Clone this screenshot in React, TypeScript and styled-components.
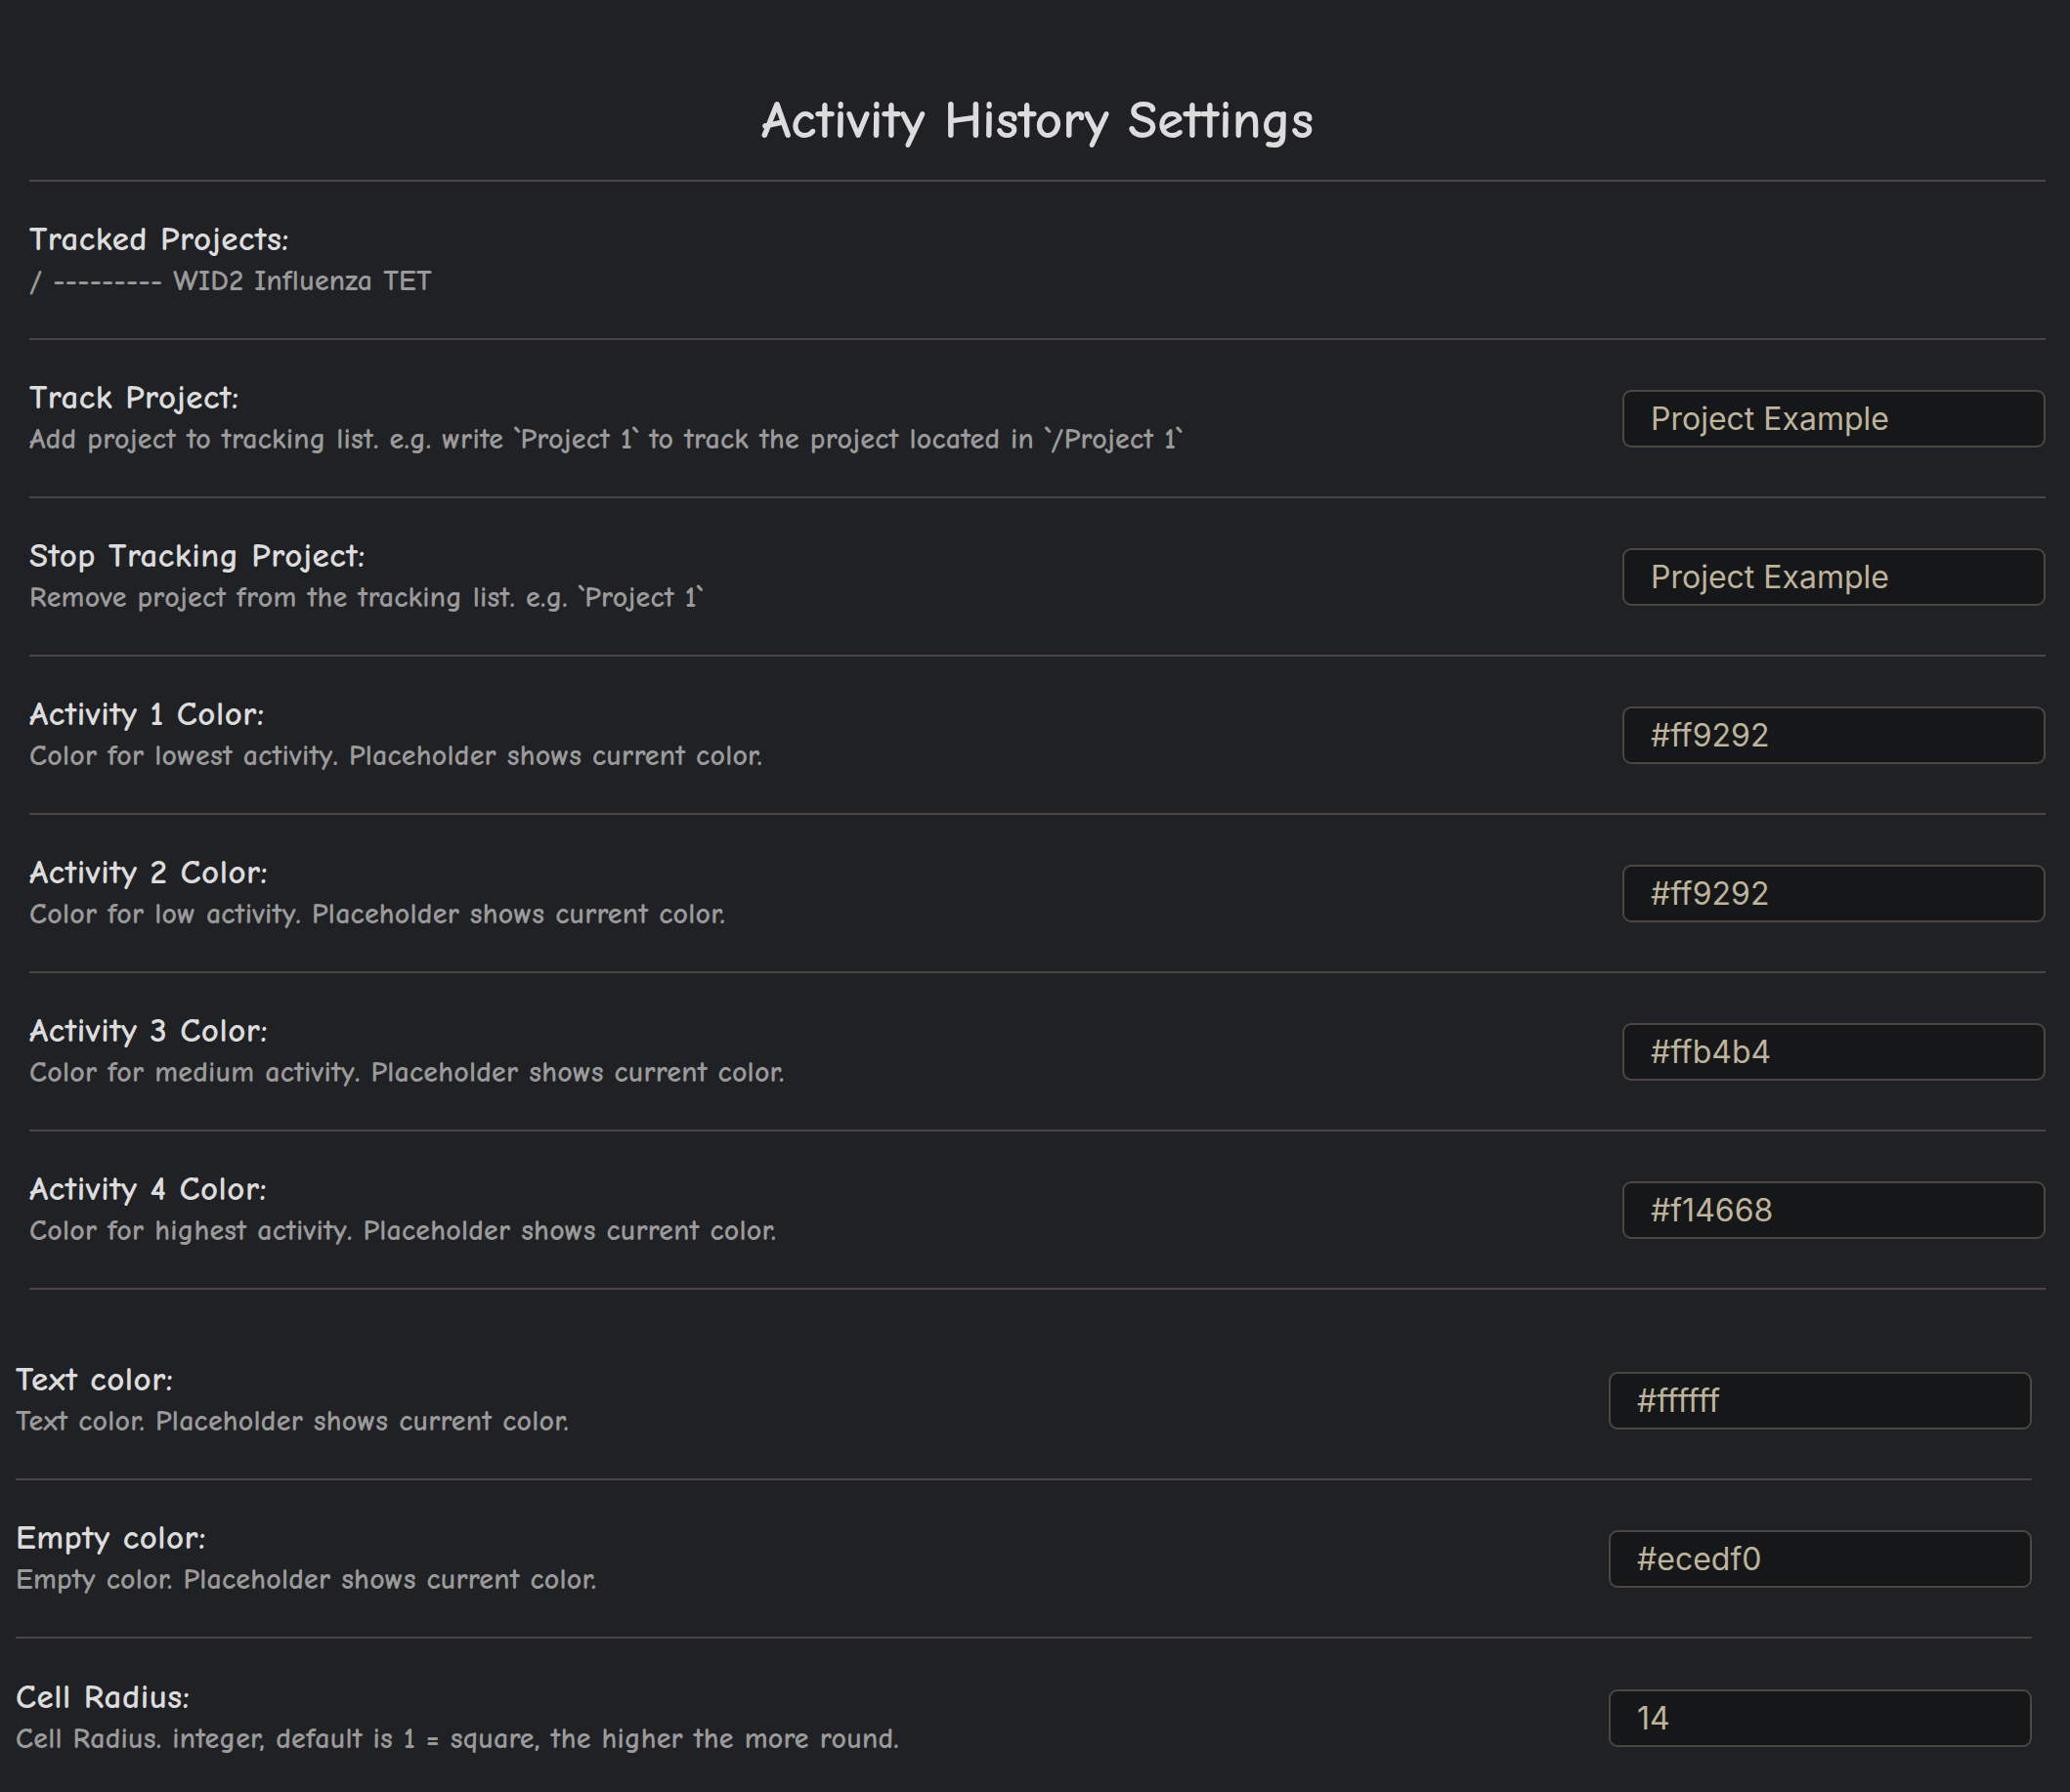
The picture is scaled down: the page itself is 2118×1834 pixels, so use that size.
import React from 'react';
import styled, { createGlobalStyle } from 'styled-components';

const GlobalStyle = createGlobalStyle`
  html, body {
    margin: 0;
    padding: 0;
    background: #202124;
  }
  * {
    box-sizing: border-box;
  }
`;

const casual = `"Comic Sans MS", "Comic Neue", Lato, "Noto Sans", sans-serif`;

const Page = styled.div`
  min-height: 100vh;
  background: #202124;
  font-family: ${casual};
  overflow: hidden;
`;

const Header = styled.header`
  margin: 0 25px 0 30px;
  padding: 93px 0 31px;
  border-bottom: 2px solid #4a4946;
`;

const Title = styled.h2`
  margin: 0;
  text-align: center;
  font-size: 55px;
  line-height: 60px;
  font-weight: 700;
  color: #dcdcdc;
`;

const Section = styled.section<{ $left: number; $right: number; $top?: number }>`
  margin: ${p => p.$top || 0}px ${p => p.$right}px 0 ${p => p.$left}px;
  display: flex;
  flex-direction: column;
`;

const Row = styled.div<{ $last?: boolean }>`
  display: flex;
  align-items: center;
  justify-content: space-between;
  gap: 40px;
  height: 162px;
  border-bottom: ${p => (p.$last ? 'none' : '2px solid #4b4641')};
`;

const Info = styled.div`
  display: flex;
  flex-direction: column;
  min-width: 0;
`;

const Name = styled.div`
  font-size: 35px;
  line-height: 43px;
  font-weight: 700;
  letter-spacing: 0.5px;
  color: #dcdcdc;
`;

const Description = styled.div`
  font-size: 30px;
  line-height: 43px;
  font-weight: 700;
  letter-spacing: 0.2px;
  color: #9a9a9a;
  white-space: nowrap;
`;

const TextInput = styled.input`
  flex: 0 0 433px;
  width: 433px;
  height: 59px;
  padding: 0 27px;
  background: #161719;
  border: 2px solid #4b4641;
  border-radius: 9px;
  outline: none;
  font-family: Inter, "Noto Sans", sans-serif;
  font-size: 32px;
  color: #beb49b;

  &::placeholder {
    color: #beb49b;
    opacity: 1;
  }
`;

interface Setting {
  name: string;
  desc: string;
  placeholder?: string;
}

const mainSettings: Setting[] = [
  { name: 'Tracked Projects:', desc: '/ --------- WID2 Influenza TET' },
  {
    name: 'Track Project:',
    desc: 'Add project to tracking list. e.g. write `Project 1` to track the project located in `/Project 1`',
    placeholder: 'Project Example',
  },
  {
    name: 'Stop Tracking Project:',
    desc: 'Remove project from the tracking list. e.g. `Project 1`',
    placeholder: 'Project Example',
  },
  { name: 'Activity 1 Color:', desc: 'Color for lowest activity. Placeholder shows current color.', placeholder: '#ff9292' },
  { name: 'Activity 2 Color:', desc: 'Color for low activity. Placeholder shows current color.', placeholder: '#ff9292' },
  { name: 'Activity 3 Color:', desc: 'Color for medium activity. Placeholder shows current color.', placeholder: '#ffb4b4' },
  { name: 'Activity 4 Color:', desc: 'Color for highest activity. Placeholder shows current color.', placeholder: '#f14668' },
];

const styleSettings: Setting[] = [
  { name: 'Text color:', desc: 'Text color. Placeholder shows current color.', placeholder: '#ffffff' },
  { name: 'Empty color:', desc: 'Empty color. Placeholder shows current color.', placeholder: '#ecedf0' },
  {
    name: 'Cell Radius:',
    desc: 'Cell Radius. integer, default is 1 = square, the higher the more round.',
    placeholder: '14',
  },
];

const SettingRow: React.FC<{ setting: Setting; last?: boolean }> = ({ setting, last }) => (
  <Row $last={last}>
    <Info>
      <Name>{setting.name}</Name>
      <Description>{setting.desc}</Description>
    </Info>
    {setting.placeholder !== undefined && <TextInput type="text" placeholder={setting.placeholder} />}
  </Row>
);

const App: React.FC = () => {
  return (
    <Page>
      <GlobalStyle />
      <Header>
        <Title>Activity History Settings</Title>
      </Header>

      <Section $left={30} $right={25}>
        {mainSettings.map(s => (
          <SettingRow key={s.name} setting={s} />
        ))}
      </Section>

      <Section $left={16} $right={39} $top={33}>
        {styleSettings.map((s, i) => (
          <SettingRow key={s.name} setting={s} last={i === styleSettings.length - 1} />
        ))}
      </Section>
    </Page>
  );
};

export default App;
